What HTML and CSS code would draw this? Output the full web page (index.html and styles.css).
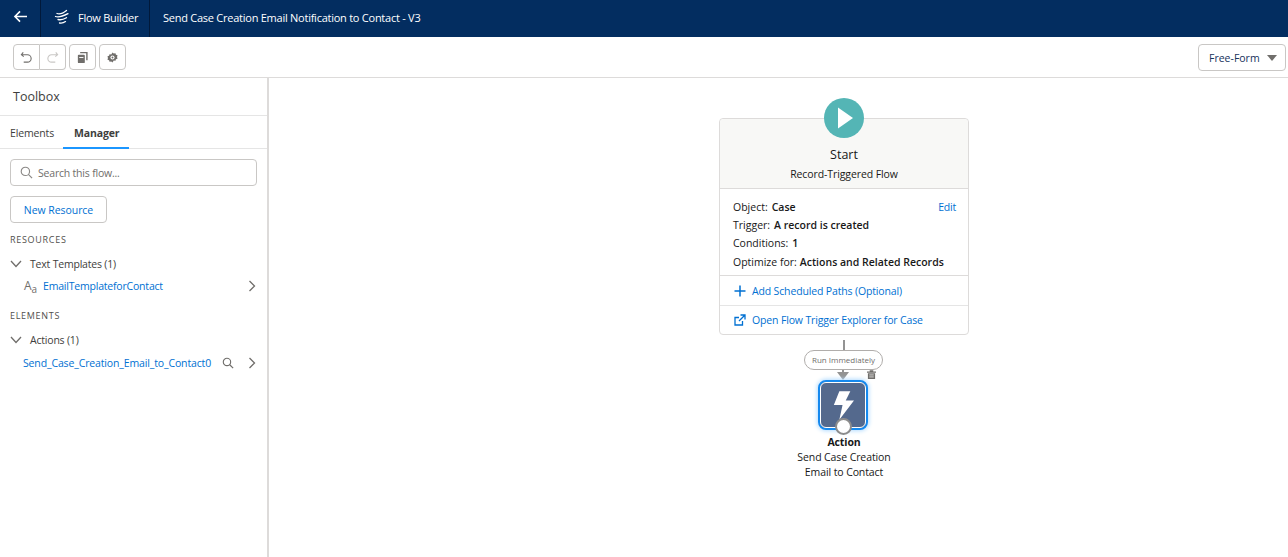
FILE: index.html
```html
<!DOCTYPE html>
<html lang="en">
<head>
<meta charset="utf-8">
<title>Flow Builder</title>
<link rel="stylesheet" href="styles.css">
</head>
<body>
<header class="topbar">
  <div class="top-back">
    <svg class="i-back" viewBox="0 0 16 14"><path d="M15 7H2M7.500 1.500 2 7l5.500 5.500" fill="none" stroke="#fff" stroke-width="1.700"/></svg>
  </div>
  <div class="top-app">
    <svg class="i-flow" viewBox="0 0 16 16"><path d="M3 4.500c3 1.200 6.500-.6 9.500-3M1.500 7.500c4 1.500 8-.5 12.500-2.800M4 10.500c3 .8 6-.3 8.500-1.800M5.500 14c2.500.5 4.500-.3 6-1.400" fill="none" stroke="#fff" stroke-width="1.300" stroke-linecap="round"/></svg>
    <span>Flow Builder</span>
  </div>
  <div class="top-title">Send Case Creation Email Notification to Contact - V3</div>
</header>
<div class="toolbar">
  <div class="btn-group">
    <button class="tool"><svg viewBox="0 0 14 14" class="ti"><path d="M3.500 1.500 1.500 4l2.500 2M2 4h6a3.800 3.800 0 0 1 0 8H4" fill="none" stroke="#706e6b" stroke-width="1.200"/></svg></button>
    <button class="tool"><svg viewBox="0 0 14 14" class="ti"><path d="M10.500 1.500 12.500 4 10 6M12 4H6a3.800 3.800 0 0 0 0 8h4" fill="none" stroke="#c9c7c5" stroke-width="1.200"/></svg></button>
  </div>
  <button class="tool solo"><svg viewBox="0 0 14 14" class="ti"><path d="M4.500 1h8v9H11V2.500H4.500z" fill="#706e6b"/><rect x="2" y="4" width="7.500" height="9" rx="1" fill="#706e6b"/><path d="M3.500 7h4.500" stroke="#fff"/></svg></button>
  <button class="tool solo"><svg viewBox="0 0 14 14" class="ti"><path d="M7 1.500l1.300 1.300 1.900-.4.500 1.700 1.700.6-.5 1.800.5 1.800-1.700.6-.5 1.700-1.900-.4L7 12.500l-1.300-1.300-1.900.4-.5-1.700-1.700-.6.500-1.800-.5-1.800 1.700-.6.500-1.700 1.900.4z" fill="#706e6b"/><circle cx="7" cy="7" r="2.200" fill="#fff"/><circle cx="7" cy="7" r="1" fill="#706e6b"/></svg></button>
  <div class="mode"><span>Free-Form</span><i class="caret"></i></div>
</div>
<div class="workspace">
  <aside class="side">
    <div class="side-title">Toolbox</div>
    <nav class="tabs">
      <span class="tab">Elements</span>
      <span class="tab active">Manager</span>
    </nav>
    <div class="side-body">
      <div class="search">
        <svg viewBox="0 0 14 14" class="si"><circle cx="5.800" cy="5.800" r="4.500" fill="none" stroke="#8a8886" stroke-width="1.200"/><path d="M9 9l4 4" stroke="#8a8886" stroke-width="1.300"/></svg>
        <span>Search this flow...</span>
      </div>
      <button class="new-res">New Resource</button>
      <h3 class="sec sec-res">RESOURCES</h3>
      <div class="grp">
        <svg viewBox="0 0 12 8" class="chev"><path d="M1 1l5 5.500L11 1" fill="none" stroke="#706e6b" stroke-width="1.300"/></svg>
        <span>Text Templates (1)</span>
      </div>
      <div class="item">
        <span class="aa">A<sub>a</sub></span>
        <a class="lnk">EmailTemplateforContact</a>
        <svg viewBox="0 0 8 12" class="more"><path d="M1.500 1l5 5-5 5" fill="none" stroke="#706e6b" stroke-width="1.300"/></svg>
      </div>
      <h3 class="sec sec-el">ELEMENTS</h3>
      <div class="grp grp-el">
        <svg viewBox="0 0 12 8" class="chev"><path d="M1 1l5 5.500L11 1" fill="none" stroke="#706e6b" stroke-width="1.300"/></svg>
        <span>Actions (1)</span>
      </div>
      <div class="item item-el">
        <a class="lnk">Send_Case_Creation_Email_to_Contact0</a>
        <svg viewBox="0 0 14 14" class="find"><circle cx="5.800" cy="5.800" r="4.300" fill="none" stroke="#706e6b" stroke-width="1.300"/><path d="M9 9l4 4" stroke="#706e6b" stroke-width="1.400"/></svg>
        <svg viewBox="0 0 8 12" class="more"><path d="M1.500 1l5 5-5 5" fill="none" stroke="#706e6b" stroke-width="1.300"/></svg>
      </div>
    </div>
  </aside>
  <main class="canvas">
    <section class="start-card">
      <div class="start-head">
        <div class="start-name">Start</div>
        <div class="start-type">Record-Triggered Flow</div>
      </div>
      <div class="start-info">
        <div class="row"><span>Object:</span><b>Case</b><a class="edit">Edit</a></div>
        <div class="row"><span>Trigger:</span><b>A record is created</b></div>
        <div class="row"><span>Conditions:</span><b>1</b></div>
        <div class="row row-tight"><span>Optimize for:</span><b>Actions and Related Records</b></div>
      </div>
      <div class="card-link l1">
        <svg viewBox="0 0 12 12" class="li"><path d="M6 .5v11M.5 6h11" stroke="#0070d2" stroke-width="1.500"/></svg>
        <span>Add Scheduled Paths (Optional)</span>
      </div>
      <div class="card-link l2">
        <svg viewBox="0 0 12 12" class="li"><path d="M8.500 7v4H1V3.500h4M6.500 1H11v4.500M11 1 5 7" fill="none" stroke="#0070d2" stroke-width="1.300"/></svg>
        <span>Open Flow Trigger Explorer for Case</span>
      </div>
    </section>
    <div class="start-circle">
      <svg viewBox="0 0 40 40" class="play"><path d="M14 9.500 29 20 14 30.500z" fill="#fff"/></svg>
    </div>
    <div class="wire"></div>
    <div class="pill">Run Immediately</div>
    <div class="stem"></div>
    <div class="arrow"></div>
    <svg viewBox="0 0 10 10" class="trash"><path d="M0 1.800h10v1.200H0zM3 .3h4v1.500H3z" fill="#706e6b"/><path d="M1 3.600h8V10H1z" fill="#706e6b"/><path d="M2.500 5.500h5M2.500 7.700h5" stroke="#fff" stroke-width=".8"/></svg>
    <div class="action">
      <svg viewBox="0 0 24 32" class="bolt"><path d="M8 1h12l-5 10h9L8 32l3.500-16H2z" fill="#fff"/></svg>
    </div>
    <div class="action-port"></div>
    <div class="action-label">
      <b>Action</b>
      <span>Send Case Creation</span>
      <span>Email to Contact</span>
    </div>
  </main>
</div>
</body>
</html>
```
FILE: styles.css
```css
* { box-sizing: border-box; }
html, body { margin: 0; height: 100%; }
body {
  width: 1288px;
  height: 557px;
  overflow: hidden;
  background: #fff;
  color: #3e3e3c;
  font: 12px/16px "Open Sans", "Noto Sans", sans-serif;
  display: flex;
  flex-direction: column;
}
.topbar {
  height: 37px;
  background: #032d60;
  color: #fff;
  display: flex;
  align-items: center;
  flex: none;
}
.top-back {
  width: 41px;
  height: 37px;
  display: flex;
  align-items: center;
  padding: 0 0 4px 13px;
  border-right: 1px solid #01193a;
}
.i-back { width: 15px; height: 13px; }
.top-app {
  width: 109px;
  height: 37px;
  display: flex;
  align-items: center;
  gap: 8px;
  padding: 0 0 2px 13px;
  border-right: 1px solid #01193a;
  font-size: 11px;
  letter-spacing: -.25px;
}
.i-flow { width: 16px; height: 16px; margin-bottom: 2px; }
.top-title { padding: 0 0 2px 13px; font-size: 11px; letter-spacing: -.25px; }
.toolbar {
  height: 41px;
  flex: none;
  display: flex;
  align-items: center;
  padding: 0 2px 0 13px;
  border-bottom: 1px solid #dddbda;
}
.btn-group { display: flex; margin-right: 3px; }
.tool {
  width: 27px;
  height: 26px;
  padding: 0;
  background: #fff;
  border: 1px solid #c9c7c5;
  display: flex;
  align-items: center;
  justify-content: center;
}
.btn-group .tool:first-child { border-radius: 4px 0 0 4px; }
.btn-group .tool:last-child { border-radius: 0 4px 4px 0; border-left: 0; width: 26px; }
.tool.solo { border-radius: 4px; margin-right: 3px; }
.ti { width: 13px; height: 13px; }
.mode {
  margin-left: auto;
  width: 88px;
  height: 27px;
  border: 1px solid #c9c7c5;
  border-radius: 4px;
  display: flex;
  align-items: center;
  justify-content: space-between;
  padding: 1px 8px 0 10px;
  font-size: 10.500px;
  white-space: nowrap;
  color: #16325c;
}
.caret {
  width: 0;
  height: 0;
  border: 5px solid transparent;
  border-top: 6px solid #706e6b;
  border-bottom: 0;
}
.workspace { flex: 1; display: flex; min-height: 0; }
.side {
  width: 269px;
  flex: none;
  border-right: 2px solid #dddbda;
}
.side-title {
  height: 38px;
  padding: 11px 13px 0;
  font-size: 12.500px;
  border-bottom: 1px solid #e5e5e5;
}
.tabs {
  height: 33px;
  display: flex;
  border-bottom: 1px solid #e5e5e5;
  font-size: 10.500px;
  letter-spacing: -.15px;
}
.tab { padding: 9px 0 0 10px; width: 63px; }
.tab.active {
  width: 66px;
  padding-left: 11px;
  font-weight: 700;
  border-bottom: 2px solid #1b96ff;
  height: 33px;
}
.side-body { padding: 10px 10px 0; font-size: 10.500px; letter-spacing: -.2px; }
.search {
  height: 27px;
  width: 247px;
  border: 1px solid #c9c7c5;
  border-radius: 4px;
  display: flex;
  align-items: center;
  gap: 5px;
  padding-left: 9px;
  color: #706e6b;
}
.si { width: 13px; height: 13px; }
.new-res {
  display: block;
  margin-top: 10px;
  width: 97px;
  height: 27px;
  padding: 0;
  background: #fff;
  border: 1px solid #c9c7c5;
  border-radius: 4px;
  color: #0070d2;
  font: 10.500px/16px "Open Sans", "Noto Sans", sans-serif;
  letter-spacing: -.05px;
}
.sec {
  margin: 0;
  font-weight: 400;
  font-size: 9px;
  line-height: 12px;
  letter-spacing: .7px;
  color: #514f4d;
}
.sec-res { margin-top: 11px; }
.sec-el { margin-top: 16px; }
.grp {
  display: flex;
  align-items: center;
  height: 16px;
  margin-top: 10px;
}
.grp-el { margin-top: 10px; }
.chev { width: 12px; height: 8px; margin-right: 8px; }
.item {
  display: flex;
  align-items: center;
  height: 16px;
  margin-top: 6px;
  position: relative;
}
.item-el { padding-left: 13px; margin-top: 7px; letter-spacing: -.14px; }
.aa { width: 20px; margin-left: 14px; color: #706e6b; font-size: 12px; margin-right: -1px; letter-spacing: 0; }
.aa sub { font-size: 10px; line-height: 0; }
.lnk { color: #0070d2; white-space: nowrap; }
.more { width: 8px; height: 12px; position: absolute; left: 238px; }
.find { width: 12px; height: 12px; position: absolute; left: 212px; }
.canvas { flex: 1; position: relative; }
.start-card {
  position: absolute;
  left: 450px;
  top: 40px;
  width: 250px;
  height: 217px;
  border: 1px solid #dddbda;
  border-radius: 4px;
  background: #fff;
  color: #181818;
}
.start-head {
  height: 70px;
  background: #f8f8f6;
  border-bottom: 1px solid #dddbda;
  border-radius: 4px 4px 0 0;
  text-align: center;
  padding-top: 27px;
}
.start-name { font-size: 12.500px; line-height: 18px; }
.start-type { font-size: 10.500px; line-height: 16px; margin-top: 2px; letter-spacing: -.1px; }
.start-info {
  height: 87px;
  padding: 9px 12px 0 13px;
  border-bottom: 1px solid #dddbda;
  font-size: 10.500px;
}
.row { display: flex; gap: 4px; height: 18.200px; line-height: 18px; }
.row-tight { gap: 3px; }
.row b { font-weight: 600; }
.edit { margin-left: auto; color: #0070d2; letter-spacing: -.2px; }
.card-link {
  display: flex;
  align-items: center;
  gap: 6px;
  padding-left: 14px;
  color: #0070d2;
  font-size: 10.500px;
  letter-spacing: -.15px;
}
.card-link.l1 { height: 30px; border-bottom: 1px solid #e5e5e5; }
.card-link.l2 { height: 28px; }
.li { width: 12px; height: 12px; }
.start-circle {
  position: absolute;
  left: 555px;
  top: 20px;
  width: 40px;
  height: 40px;
  border-radius: 50%;
  background: #54b5b5;
}
.play { width: 40px; height: 40px; display: block; }
.wire {
  position: absolute;
  left: 574px;
  top: 262px;
  width: 2px;
  height: 13px;
  background: #939393;
}
.pill {
  position: absolute;
  left: 535px;
  top: 272px;
  width: 79px;
  height: 20px;
  border: 1px solid #b0adab;
  border-radius: 10px;
  background: #fff;
  text-align: center;
  font-size: 8px;
  line-height: 18px;
  color: #706e6b;
}
.stem {
  position: absolute;
  left: 573px;
  top: 292px;
  width: 2px;
  height: 3px;
  background: #939393;
}
.arrow {
  position: absolute;
  left: 568px;
  top: 294px;
  width: 0;
  height: 0;
  border: 6px solid transparent;
  border-top: 8px solid #939393;
  border-bottom: 0;
}
.trash { position: absolute; left: 598px; top: 292px; width: 9px; height: 9px; }
.action {
  position: absolute;
  left: 549px;
  top: 302px;
  width: 50px;
  height: 50px;
  border-radius: 8px;
  background: #54698d;
  border: 2px solid #1589ee;
  box-shadow: 0 0 4px 1px #b3dcff;
  outline: 1px solid #fff;
  outline-offset: -3px;
  display: flex;
  align-items: center;
  justify-content: center;
}
.bolt { width: 22px; height: 30px; }
.action-port {
  position: absolute;
  left: 566px;
  top: 340px;
  width: 17px;
  height: 17px;
  border-radius: 50%;
  background: #fff;
  border: 2px solid #8c8c8c;
}
.action-label {
  position: absolute;
  left: 500px;
  top: 357px;
  width: 150px;
  display: flex;
  flex-direction: column;
  align-items: center;
  font-size: 10.500px;
  line-height: 15px;
  letter-spacing: -.1px;
  color: #181818;
}
.action-label b { font-weight: 700; }
```
